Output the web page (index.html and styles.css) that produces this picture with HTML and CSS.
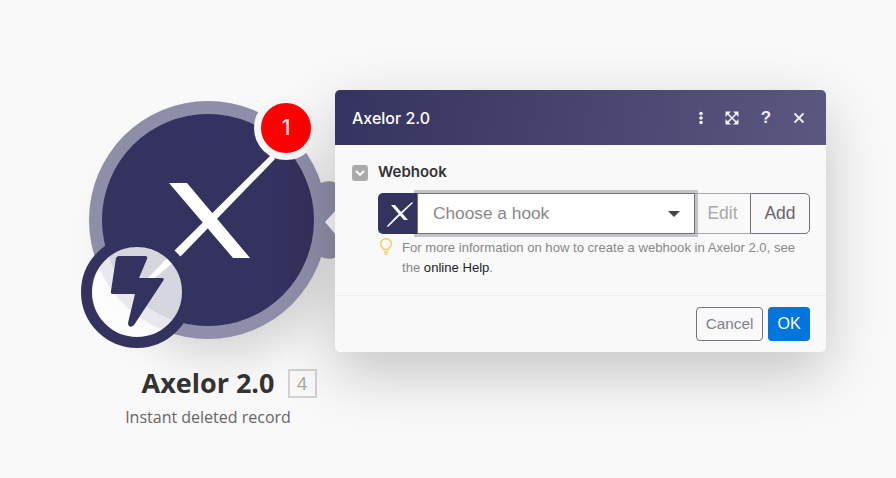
FILE: index.html
```html
<!DOCTYPE html>
<html lang="en">
<head>
  <meta charset="UTF-8" />
  <title>Axelor 2.0 webhook</title>
  <link rel="stylesheet" href="styles.css">
</head>
<body>
  <div class="canvas">

    <div class="node">
      <svg class="node-art" width="300" height="300" viewBox="60 80 300 300">
        <circle class="node-shadow" cx="222" cy="246" r="112" />
        <path class="ring" d="M318 185 a18 18 0 0 1 22 0 v70 a18 18 0 0 1 -22 0 z" />
        <circle class="ring" cx="208" cy="220" r="119" />
        <circle class="disc" cx="208" cy="220" r="106" />
        <path class="notch" d="M325 222 L336 210 V235 Z" />
        <path class="logo" d="M169 183 H187 L250 258 H233 Z" />
        <path class="logo" d="M271 155 L275 159 L182 255 L150 282 L147 279 L176 249 Z" />
        <circle class="trigger-disc" cx="137" cy="292" r="50.5" />
        <path class="bolt" d="M119 256 H145 Q148 256 147 259 L139 278 H162 Q165 278 163 281 L134 325 Q131 328 129 326 Q128 325 128 323 L135 294 H113 Q110 294 111 291 L116 258 Q117 256 119 256 Z" />
      </svg>
      <div class="count-badge">1</div>
      <div class="node-label">
        <div class="node-title">
          <span class="node-name">Axelor 2.0</span>
          <span class="node-id">4</span>
        </div>
        <div class="node-sub">Instant deleted record</div>
      </div>
    </div>

    <div class="panel">
      <div class="panel-head">
        <span class="panel-title">Axelor 2.0</span>
        <div class="panel-tools">
          <svg width="6" height="14" viewBox="0 0 6 14"><circle cx="3" cy="2.5" r="1.8" /><circle cx="3" cy="7" r="1.8" /><circle cx="3" cy="11.5" r="1.8" /></svg>
          <svg class="tool-expand" width="14" height="14" viewBox="0 0 14 14"><path d="M0.5 0.5 H6 L0.5 6 Z M8 0.5 H13.5 V6 Z M0.5 8 L6 13.5 H0.5 Z M13.5 8 V13.5 H8 Z" /><path class="tool-line" d="M2 2 L12 12 M12 2 L2 12" /></svg>
          <span class="tool-help">?</span>
          <svg class="tool-close" width="12" height="12" viewBox="0 0 12 12"><path d="M1.5 1.5 L10.5 10.5 M10.5 1.5 L1.5 10.5" /></svg>
        </div>
      </div>

      <div class="panel-body">
        <div class="field-label">
          <span class="toggle">
            <svg width="10" height="6" viewBox="0 0 10 6"><path d="M1 1 L5 5 L9 1" /></svg>
          </span>
          <span class="field-name">Webhook</span>
        </div>
        <div class="hook-row">
          <span class="hook-icon">
            <svg width="28" height="28" viewBox="0 0 28 28"><path d="M6 5 H10 L23 20 H19 Z" /><path d="M27 2 L28 3 L3 27 L2 26 L11 16.5 Z" /></svg>
          </span>
          <div class="hook-select">
            <span>Choose a hook</span>
            <span class="caret"></span>
          </div>
          <button class="btn-edit">Edit</button>
          <button class="btn-add">Add</button>
        </div>
        <div class="hint">
          <svg class="bulb" width="14" height="17" viewBox="0 0 14 17"><path d="M4.5 11.5 C4.5 9 1.5 8.5 1.5 5.8 A5.5 5 0 0 1 12.5 5.8 C12.5 8.5 9.5 9 9.5 11.5 Z M5 14 H9 M5.8 16 H8.2" /></svg>
          <p>For more information on how to create a webhook in Axelor 2.0, see the <a href="#">online Help</a>.</p>
        </div>
      </div>

      <div class="panel-foot">
        <button class="btn-cancel">Cancel</button>
        <button class="btn-ok">OK</button>
      </div>
    </div>

  </div>
</body>
</html>
```

FILE: styles.css
```css
* {
  box-sizing: border-box;
  margin: 0;
  padding: 0;
}

html,
body {
  width: 896px;
  height: 478px;
  overflow: hidden;
}

body {
  background-color: #f9f9f9;
  font-family: 'Liberation Sans', Arial, sans-serif;
  color: #333;
}

.canvas {
  position: relative;
  width: 896px;
  height: 478px;
}

/* node */
.node-art {
  position: absolute;
  left: 60px;
  top: 80px;
  overflow: visible;
}

.node-shadow {
  fill: #000;
  opacity: 0.14;
  filter: blur(22px);
}

.ring {
  fill: #8e8ea9;
}

.disc {
  fill: #34325e;
}

.notch {
  fill: #f9f9f9;
}

.logo {
  fill: #fff;
}

.trigger-disc {
  fill: rgba(255, 255, 255, 0.8);
  stroke: #34325e;
  stroke-width: 11;
}

.bolt {
  fill: #34325e;
}

.count-badge {
  position: absolute;
  left: 254px;
  top: 96px;
  width: 64px;
  height: 64px;
  border: 7px solid #f6f6f6;
  border-radius: 50%;
  background-color: #f00;
  color: #fde0e0;
  font-family: 'Inter', sans-serif;
  font-size: 21px;
  font-weight: 500;
  line-height: 50px;
  text-align: center;
}

.node-label {
  position: absolute;
  left: 88px;
  top: 367px;
  width: 240px;
  display: flex;
  flex-direction: column;
  align-items: center;
}

.node-title {
  display: flex;
  align-items: center;
  gap: 13px;
  margin-left: 42px;
}

.node-name {
  font-family: 'Open Sans', sans-serif;
  font-size: 27px;
  font-weight: 700;
  line-height: 32px;
  color: #333;
  white-space: nowrap;
}

.node-id {
  width: 29px;
  height: 29px;
  border: 2px solid #d2d2d2;
  color: #aaa;
  font-size: 19px;
  line-height: 25px;
  text-align: center;
}

.node-sub {
  margin-top: 7px;
  font-family: 'Open Sans', sans-serif;
  font-size: 16px;
  line-height: 22px;
  color: #666;
}

/* panel */
.panel {
  position: absolute;
  left: 335px;
  top: 90px;
  width: 491px;
  height: 262px;
  display: flex;
  flex-direction: column;
  border-radius: 5px;
  background-color: #f9f9f9;
  box-shadow: 0 20px 60px rgba(0, 0, 0, 0.22);
}

.panel-head {
  height: 55px;
  padding: 0 21px 0 17px;
  display: flex;
  align-items: center;
  justify-content: space-between;
  border-radius: 5px 5px 0 0;
  background: linear-gradient(100deg, #35335f, #5a5880);
  color: white;
}

.panel-title {
  font-family: 'Inter', sans-serif;
  font-size: 16px;
  font-weight: 500;
}

.panel-tools {
  display: flex;
  align-items: center;
  gap: 20px;
}

.panel-tools svg {
  fill: #eeeef3;
}

.panel-tools .tool-expand {
  margin-left: 1px;
}

.tool-line {
  fill: none;
  stroke: #eeeef3;
  stroke-width: 1.6;
}

.tool-help {
  width: 14px;
  font-size: 17px;
  font-weight: 700;
  color: #eeeef3;
  text-align: center;
}

.panel-tools .tool-close {
  fill: none;
  stroke: #eeeef3;
  stroke-width: 1.8;
}

.panel-body {
  flex: 1;
  padding: 20px 16px 0 17px;
}

.field-label {
  display: flex;
  align-items: center;
  gap: 10px;
  height: 16px;
  margin-bottom: 12px;
  font-family: 'Inter', sans-serif;
  font-size: 15px;
  font-weight: 600;
  color: #333;
}

.field-name {
  padding-bottom: 3px;
}

.toggle {
  width: 16px;
  height: 16px;
  display: flex;
  align-items: center;
  justify-content: center;
  border-radius: 3px;
  background-color: #aaa;
}

.toggle svg {
  fill: none;
  stroke: #fff;
  stroke-width: 2;
}

.hook-row {
  display: flex;
  height: 41px;
  margin-left: 26px;
}

.hook-icon {
  width: 39px;
  padding-left: 3px;
  position: relative;
  z-index: 1;
  display: flex;
  align-items: center;
  justify-content: center;
  border-radius: 5px 0 0 5px;
  background-color: #34325e;
}

.hook-icon svg {
  fill: #fff;
}

.hook-select {
  width: 278px;
  padding: 0 14px 0 15px;
  display: flex;
  align-items: center;
  justify-content: space-between;
  border: 1px solid #6e7480;
  background-color: white;
  box-shadow: 0 0 0 3px #c4c4c4;
  font-size: 17.3px;
  color: #888;
}

.caret {
  width: 0;
  height: 0;
  border-left: 6px solid transparent;
  border-right: 6px solid transparent;
  border-top: 6px solid #444;
}

.hook-row button {
  background: none;
  font-family: inherit;
  font-size: 17.5px;
  border: 1px solid #6e7480;
}

.btn-edit {
  width: 55px;
  border-left: none !important;
  border-right: none !important;
  border-color: #a5a9b1 !important;
  color: #a9a9a9;
}

.btn-add {
  width: 60px;
  border-radius: 0 5px 5px 0;
  color: #666;
}

.hint {
  display: flex;
  gap: 9px;
  margin-top: 4px;
  margin-left: 27px;
}

.bulb {
  flex: none;
  fill: none;
  stroke: #f8c95c;
  stroke-width: 1.4;
}

.hint p {
  width: 400px;
  font-size: 13.1px;
  line-height: 20px;
  color: #888;
}

.hint a {
  color: #222;
  text-decoration: none;
}

.panel-foot {
  height: 57px;
  padding: 11px 16px 0 0;
  display: flex;
  justify-content: flex-end;
  gap: 5px;
  border-top: 1px solid #eee;
}

.panel-foot button {
  height: 34px;
  font-family: inherit;
  font-size: 16px;
  border-radius: 4px;
}

.panel-foot .btn-cancel {
  width: 67px;
  border: 1px solid #6e7480;
  background: none;
  color: #7b818b;
  font-size: 15.3px;
}

.btn-ok {
  width: 42px;
  border: none;
  background-color: #0076dc;
  color: white;
}
```
